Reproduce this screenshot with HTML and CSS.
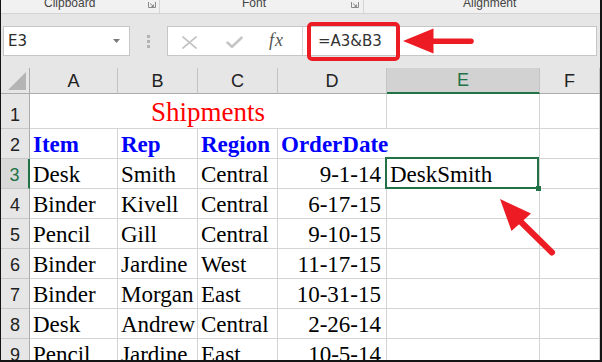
FILE: index.html
```html
<!DOCTYPE html>
<html>
<head>
<meta charset="utf-8">
<link rel="stylesheet" href="styles.css">
</head>
<body>
<div class="frame">
  <div class="ribbon">
    <div class="group g1"><span class="glabel">Clipboard</span><svg class="launch" width="8" height="6" viewBox="0 0 8 6"><path d="M0.5 0v5.5H7.5V0" fill="none" stroke="#8a8a8a" stroke-width="1"/><path d="M2 1.5l3.5 3M5.5 2.5v2h-2" fill="none" stroke="#8a8a8a" stroke-width="1"/></svg></div>
    <div class="group g2"><span class="glabel">Font</span><svg class="launch" width="8" height="6" viewBox="0 0 8 6"><path d="M0.5 0v5.5H7.5V0" fill="none" stroke="#8a8a8a" stroke-width="1"/><path d="M2 1.5l3.5 3M5.5 2.5v2h-2" fill="none" stroke="#8a8a8a" stroke-width="1"/></svg></div>
    <div class="group g3"><span class="glabel">Alignment</span></div>
  </div>

  <div class="fbar">
    <div class="namebox">
      <span class="nbtext">E3</span>
      <svg class="dd" width="7" height="4" viewBox="0 0 7 4"><polygon points="0,0 7,0 3.5,4" fill="#7a7a7a"/></svg>
    </div>
    <div class="grip"><i></i><i></i><i></i></div>
    <div class="formula">
      <div class="fbtns">
        <svg class="ico-x" width="15" height="13" viewBox="0 0 15 13"><path d="M0.5 0.5L14.5 12.5M14.5 0.5L0.5 12.5" stroke="#c2c2c2" stroke-width="1.6" fill="none"/></svg>
        <svg class="ico-ok" width="17" height="12" viewBox="0 0 17 12"><path d="M0.8 6L6 10.8L16.3 1" stroke="#c6c6c6" stroke-width="2.6" fill="none"/></svg>
        <span class="fx"><i>f</i><i class="x">x</i></span>
      </div>
      <div class="finput"><span class="ftext">=A3&amp;B3</span></div>
    </div>
  </div>

  <div class="sheet">
    <div class="corner"><svg width="28" height="25" viewBox="0 0 28 25"><polygon points="25,4 25,22 7,22" fill="#b4b4b4"/></svg></div>
    <div class="h">A</div>
    <div class="h">B</div>
    <div class="h">C</div>
    <div class="h">D</div>
    <div class="h selcol">E</div>
    <div class="h">F</div>

    <div class="rh">1</div>
    <div class="c title">Shipments</div>
    <div class="c"></div>
    <div class="c"></div>

    <div class="rh">2</div>
    <div class="c b">Item</div>
    <div class="c b">Rep</div>
    <div class="c b">Region</div>
    <div class="c b nob">OrderDate</div>
    <div class="c"></div>
    <div class="c"></div>

    <div class="rh selrow">3</div>
    <div class="c">Desk</div>
    <div class="c">Smith</div>
    <div class="c">Central</div>
    <div class="c r">9-1-14</div>
    <div class="c active">DeskSmith<span class="handle"></span></div>
    <div class="c"></div>

    <div class="rh">4</div>
    <div class="c">Binder</div>
    <div class="c">Kivell</div>
    <div class="c">Central</div>
    <div class="c r">6-17-15</div>
    <div class="c"></div>
    <div class="c"></div>

    <div class="rh">5</div>
    <div class="c">Pencil</div>
    <div class="c">Gill</div>
    <div class="c">Central</div>
    <div class="c r">9-10-15</div>
    <div class="c"></div>
    <div class="c"></div>

    <div class="rh">6</div>
    <div class="c">Binder</div>
    <div class="c">Jardine</div>
    <div class="c">West</div>
    <div class="c r">11-17-15</div>
    <div class="c"></div>
    <div class="c"></div>

    <div class="rh">7</div>
    <div class="c">Binder</div>
    <div class="c">Morgan</div>
    <div class="c">East</div>
    <div class="c r">10-31-15</div>
    <div class="c"></div>
    <div class="c"></div>

    <div class="rh">8</div>
    <div class="c">Desk</div>
    <div class="c">Andrew</div>
    <div class="c">Central</div>
    <div class="c r">2-26-14</div>
    <div class="c"></div>
    <div class="c"></div>

    <div class="rh">9</div>
    <div class="c">Pencil</div>
    <div class="c">Jardine</div>
    <div class="c">East</div>
    <div class="c r">10-5-14</div>
    <div class="c"></div>
    <div class="c"></div>
  </div>

  <svg class="annot" width="602" height="362" viewBox="0 0 602 362">
    <rect x="309" y="24" width="89" height="35" rx="3" ry="3" fill="none" stroke="#ed1c24" stroke-width="4"/>
    <polygon points="403,41 433.5,28.5 433.5,53.5" fill="#ed1c24"/>
    <line x1="431" y1="41.3" x2="471" y2="41.3" stroke="#ed1c24" stroke-width="5.5" stroke-linecap="round"/>
    <polygon points="500,199 531,213.5 511.5,231" fill="#ed1c24"/>
    <line x1="519" y1="220" x2="552" y2="252.5" stroke="#ed1c24" stroke-width="6" stroke-linecap="round"/>
  </svg>
</div>
</body>
</html>
```

FILE: styles.css
```css
* {
  box-sizing: border-box;
  margin: 0;
  padding: 0;
}

html,
body {
  width: 602px;
  height: 362px;
  overflow: hidden;
  background: #ffffff;
}

body {
  font-family: "Liberation Sans", Arial, sans-serif;
}

.frame {
  position: relative;
  width: 602px;
  height: 362px;
  border-left: 1px solid #141414;
  border-right: 2px solid #141414;
  border-bottom: 2px solid #141414;
  background: #e6e6e6;
  overflow: hidden;
}

/* ribbon strip */
.ribbon {
  display: flex;
  height: 14px;
  background: #f1f1f1;
  border-bottom: 1px solid #d4d4d4;
  overflow: hidden;
}

.group {
  display: flex;
  align-items: flex-start;
  height: 13px;
}

.g1 {
  width: 159px;
  padding-left: 43px;
  border-right: 1px solid #d6d6d6;
}

.g2 {
  width: 204px;
  padding-left: 82px;
  border-right: 1px solid #d6d6d6;
}

.g3 {
  flex: 1;
  padding-left: 99px;
}

.glabel {
  font-size: 12px;
  line-height: 12px;
  margin-top: -3px;
  color: #444444;
  white-space: nowrap;
}

.launch {
  display: block;
  margin-left: auto;
  margin-right: 3px;
  margin-top: 2px;
}

.g2 .launch {
  margin-right: 4px;
}

/* formula bar */
.fbar {
  display: flex;
  align-items: flex-start;
  height: 54px;
  padding: 12px 3px 12px 2px;
}

.namebox {
  display: flex;
  align-items: center;
  width: 127px;
  height: 30px;
  padding-left: 4px;
  padding-right: 9px;
  background: #ffffff;
  border: 1px solid #c6c6c6;
}

.nbtext {
  font-family: "DejaVu Sans", sans-serif;
  font-size: 15px;
  color: #2b2b2b;
}

.dd {
  display: block;
  margin-left: auto;
}

.grip {
  display: flex;
  flex-direction: column;
  align-items: center;
  justify-content: center;
  gap: 2px;
  width: 37px;
  height: 30px;
}

.grip i {
  display: block;
  width: 3px;
  height: 3px;
  background: #b3b3b3;
}

.formula {
  flex: 1;
  display: flex;
  height: 30px;
  background: #ffffff;
  border: 1px solid #c6c6c6;
}

.fbtns {
  display: flex;
  align-items: center;
  width: 135px;
  padding-left: 14px;
  border-right: 1px solid #d6d6d6;
}

.ico-x {
  display: block;
  margin-top: 2px;
  margin-right: 29px;
}

.ico-ok {
  display: block;
  margin-top: 2px;
  margin-right: 26px;
}

.fx {
  font-family: "Liberation Serif", serif;
  font-size: 18px;
  color: #555555;
  margin-top: -2px;
}

.fx i {
  font-style: italic;
}

.fx .x {
  margin-left: 1px;
}

.finput {
  display: flex;
  align-items: center;
  padding-left: 15px;
}

.ftext {
  font-family: "DejaVu Sans", sans-serif;
  font-size: 15px;
  color: #333333;
}

/* sheet grid */
.sheet {
  display: grid;
  grid-template-columns: 29px 88px 80px 80px 109px 153px 60px;
  grid-template-rows: 26px 35px repeat(8, 30px);
  background: #ffffff;
}

.corner {
  background: #e6e6e6;
  border-right: 1px solid #ababab;
  border-bottom: 1px solid #ababab;
}

.corner svg {
  display: block;
}

.h {
  display: flex;
  align-items: flex-end;
  justify-content: center;
  padding-bottom: 1px;
  background: #e6e6e6;
  border-right: 1px solid #c4c4c4;
  border-bottom: 1px solid #ababab;
  font-family: "Liberation Sans", Arial, sans-serif;
  font-size: 18px;
  color: #222222;
}

.selcol {
  background: #d2d2d2;
  color: #217346;
  border-bottom: 2px solid #217346;
}

.rh {
  display: flex;
  align-items: flex-end;
  justify-content: center;
  padding-bottom: 2px;
  background: #e6e6e6;
  border-right: 1px solid #ababab;
  border-bottom: 1px solid #c8c8c8;
  font-family: "Liberation Sans", Arial, sans-serif;
  font-size: 18px;
  color: #222222;
}

.selrow {
  background: #d9d9d9;
  color: #217346;
  border-right: 2px solid #217346;
}

.c {
  display: flex;
  align-items: flex-end;
  padding: 0 3px;
  border-right: 1px solid #d4d4d4;
  border-bottom: 1px solid #d4d4d4;
  font-family: "Liberation Serif", "Times New Roman", serif;
  font-size: 23px;
  color: #000000;
  white-space: nowrap;
}

.title {
  grid-column: span 4;
  justify-content: center;
  font-size: 27px;
  color: #ff0000;
}

.b {
  font-weight: bold;
  color: #0000ff;
}

.nob {
  border-right-color: #ffffff;
}

.r {
  justify-content: flex-end;
  padding-right: 5px;
}

.active {
  position: relative;
}

.active::before {
  content: "";
  position: absolute;
  left: -2px;
  top: -2px;
  right: 0;
  bottom: -1px;
  border: 2px solid #217346;
  z-index: 2;
}

.handle {
  position: absolute;
  right: -2px;
  bottom: -3px;
  width: 5px;
  height: 5px;
  background: #217346;
  z-index: 3;
}

.annot {
  position: absolute;
  left: -1px;
  top: 0;
  pointer-events: none;
  z-index: 5;
}
```
